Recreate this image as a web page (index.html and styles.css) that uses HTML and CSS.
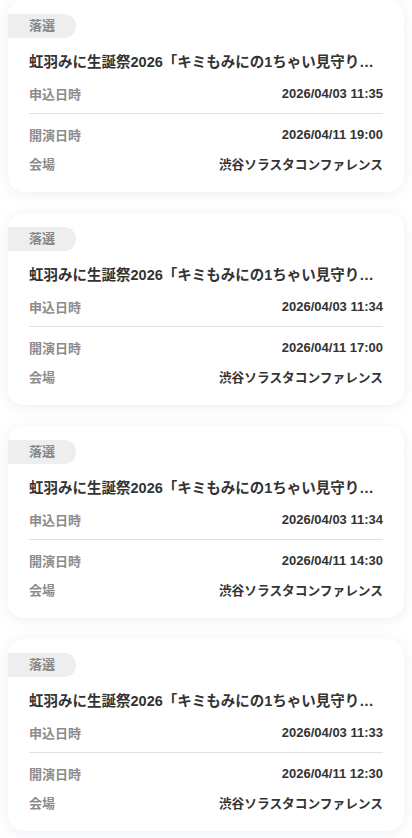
FILE: index.html
```html
<!DOCTYPE html>
<html lang="ja">
<head>
  <meta charset="UTF-8">
  <meta name="viewport" content="width=device-width, initial-scale=1.0">
  <title>申込履歴</title>
  <link rel="stylesheet" href="styles.css">
</head>
<body>
  <div class="entry-list">

    <!-- entry 1 -->
    <div class="entry-card">
      <span class="status">落選</span>
      <p class="entry-title">虹羽みに生誕祭2026「キミもみにの1ちゃい見守り隊」〜はじめてのおたんじょうび〜</p>
      <div class="info-row">
        <span class="label">申込日時</span>
        <span class="value">2026/04/03 11:35</span>
      </div>
      <hr class="divider">
      <div class="info-row">
        <span class="label">開演日時</span>
        <span class="value">2026/04/11 19:00</span>
      </div>
      <div class="info-row row-venue">
        <span class="label">会場</span>
        <span class="value venue">渋谷ソラスタコンファレンス</span>
      </div>
    </div>

    <!-- entry 2 -->
    <div class="entry-card">
      <span class="status">落選</span>
      <p class="entry-title">虹羽みに生誕祭2026「キミもみにの1ちゃい見守り隊」〜はじめてのおたんじょうび〜</p>
      <div class="info-row">
        <span class="label">申込日時</span>
        <span class="value">2026/04/03 11:34</span>
      </div>
      <hr class="divider">
      <div class="info-row">
        <span class="label">開演日時</span>
        <span class="value">2026/04/11 17:00</span>
      </div>
      <div class="info-row row-venue">
        <span class="label">会場</span>
        <span class="value venue">渋谷ソラスタコンファレンス</span>
      </div>
    </div>

    <!-- entry 3 -->
    <div class="entry-card">
      <span class="status">落選</span>
      <p class="entry-title">虹羽みに生誕祭2026「キミもみにの1ちゃい見守り隊」〜はじめてのおたんじょうび〜</p>
      <div class="info-row">
        <span class="label">申込日時</span>
        <span class="value">2026/04/03 11:34</span>
      </div>
      <hr class="divider">
      <div class="info-row">
        <span class="label">開演日時</span>
        <span class="value">2026/04/11 14:30</span>
      </div>
      <div class="info-row row-venue">
        <span class="label">会場</span>
        <span class="value venue">渋谷ソラスタコンファレンス</span>
      </div>
    </div>

    <!-- entry 4 -->
    <div class="entry-card">
      <span class="status">落選</span>
      <p class="entry-title">虹羽みに生誕祭2026「キミもみにの1ちゃい見守り隊」〜はじめてのおたんじょうび〜</p>
      <div class="info-row">
        <span class="label">申込日時</span>
        <span class="value">2026/04/03 11:33</span>
      </div>
      <hr class="divider">
      <div class="info-row">
        <span class="label">開演日時</span>
        <span class="value">2026/04/11 12:30</span>
      </div>
      <div class="info-row row-venue">
        <span class="label">会場</span>
        <span class="value venue">渋谷ソラスタコンファレンス</span>
      </div>
    </div>

  </div>
</body>
</html>
```

FILE: styles.css
```css
body {
  margin: 0;
  background-color: #fff;
  font-family: "Liberation Sans", "Noto Sans CJK JP", sans-serif;
  color: #333;
}
.entry-list {
  display: flex;
  flex-direction: column;
  gap: 21px;
  padding: 0 8px 20px;
}
.entry-card {
  background: #fff;
  border-radius: 16px;
  box-shadow: 0 2px 14px rgba(70, 100, 170, 0.1);
  padding: 14px 0 19px;
  display: flex;
  flex-direction: column;
}
.status {
  align-self: flex-start;
  height: 24px;
  line-height: 24px;
  padding: 0 21px;
  background-color: #eeeeee;
  border-radius: 0 12px 12px 0;
  color: #888;
  font-size: 13px;
  font-weight: bold;
}
.entry-title {
  margin: 14px 21px 0;
  font-size: 14.5px;
  line-height: 20px;
  font-weight: bold;
  color: #333;
  white-space: nowrap;
  overflow: hidden;
  text-overflow: ellipsis;
}
.info-row {
  display: flex;
  justify-content: space-between;
  align-items: center;
  margin: 11px 21px 0;
  height: 20px;
}
.divider + .info-row {
  margin-top: 0;
}
.row-venue {
  margin-top: 9px;
}
.divider {
  border: none;
  border-top: 1px solid #e2e2e2;
  margin: 10px 21px;
}
.label {
  font-size: 13px;
  font-weight: bold;
  color: #8c8c8c;
}
.value {
  font-size: 13px;
  font-weight: bold;
  color: #333;
}
.venue {
  font-size: 12.7px;
}
```
